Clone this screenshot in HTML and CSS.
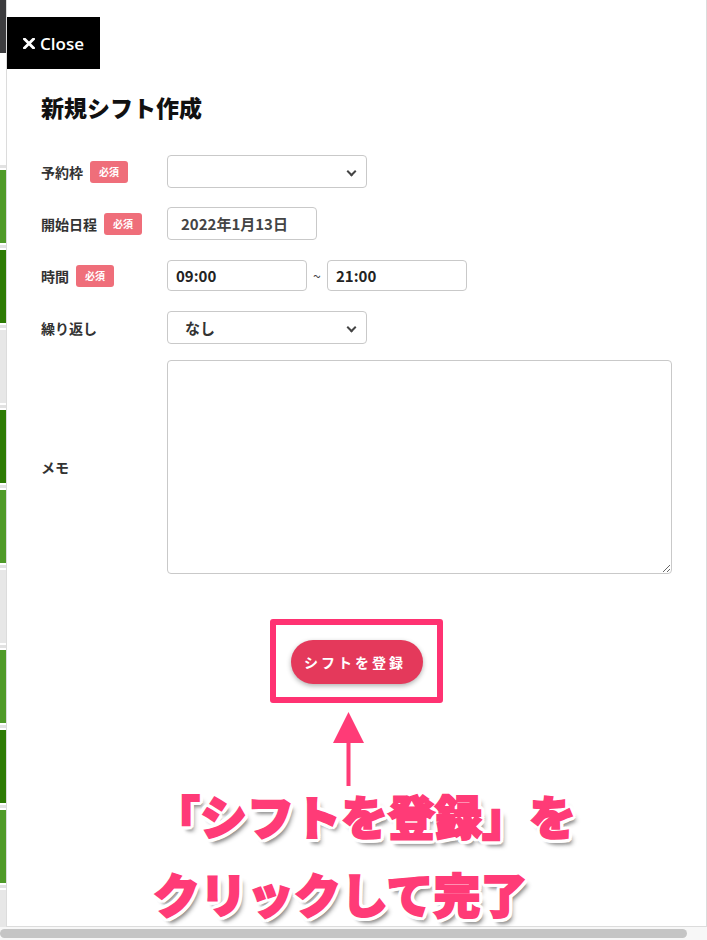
FILE: index.html
```html
<!DOCTYPE html>
<html lang="ja">
<head>
<meta charset="utf-8">
<title>新規シフト作成</title>
<link rel="stylesheet" href="styles.css">
</head>
<body>
<div class="screen">
  <div class="strip">
    <div class="s-top"></div>
    <div class="s-blank"></div>
    <div class="cell lg"></div>
    <div class="cell dg"></div>
    <div class="cell gr"></div>
    <div class="cell dg"></div>
    <div class="cell lg"></div>
    <div class="cell gr"></div>
    <div class="cell lg"></div>
    <div class="cell dg"></div>
    <div class="cell lg"></div>
    <div class="cell gr last"></div>
  </div>
  <div class="modal">
    <button class="close" type="button">
      <svg class="close-x" width="12" height="11" viewBox="0 0 12 11"><path d="M1.5 1 L10.5 10 M10.5 1 L1.5 10" stroke="#fff" stroke-width="2.8" stroke-linecap="square"/></svg>
      <span>Close</span>
    </button>
    <h2 class="title">新規シフト作成</h2>
    <form class="form">
      <div class="row r1">
        <div class="label">予約枠<span class="badge">必須</span></div>
        <div class="select-wrap w200"><select class="field select"><option></option></select></div>
      </div>
      <div class="row r2">
        <div class="label">開始日程<span class="badge">必須</span></div>
        <input class="field date" type="text" value="2022年1月13日">
      </div>
      <div class="row r3">
        <div class="label">時間<span class="badge">必須</span></div>
        <input class="field time" type="text" value="09:00">
        <span class="tilde">~</span>
        <input class="field time" type="text" value="21:00">
      </div>
      <div class="row r4">
        <div class="label">繰り返し</div>
        <div class="select-wrap w200"><select class="field select pad"><option>なし</option></select></div>
      </div>
      <div class="row r5">
        <div class="label">メモ</div>
        <textarea class="field memo"></textarea>
      </div>
    </form>
    <div class="actions"><button class="submit" type="button">シフトを登録</button></div>

    <div class="annot-rect"></div>
    <svg class="annot-arrow" width="31" height="74" viewBox="0 0 31 74">
      <polygon points="15.5,0 31,31 0,31" fill="#ff3b77"/>
      <rect x="13.5" y="28" width="4" height="46" fill="#ff3b77"/>
    </svg>
    <div class="annot-text">
      <div>「シフトを登録」を</div>
      <div>クリックして完了</div>
    </div>
  </div>
</div>
<div class="hscroll"><div class="thumb"></div></div>
</body>
</html>
```
FILE: styles.css
```css
* { box-sizing: border-box; }
html, body { margin: 0; padding: 0; }
body {
  width: 707px;
  height: 940px;
  overflow: hidden;
  background: #f7f7f7;
  font-family: "Noto Sans CJK JP", "Noto Sans", sans-serif;
  color: #333;
}
.screen {
  display: flex;
  height: 927px;
}
.strip {
  width: 6px;
  flex: none;
  display: flex;
  flex-direction: column;
  background: #fff;
  overflow: hidden;
}
.s-top { height: 53px; background: #3c3c3e; flex: none; }
.s-blank { height: 110px; background: #fff; flex: none; }
.cell {
  height: 80px;
  flex: none;
  --c: #e6e6e6;
  background: linear-gradient(#fff 0 2px, #e2e2e2 2px 5px, #fff 5px 7px, var(--c) 7px);
}
.cell.lg { --c: #4f9a28; }
.cell.dg { --c: #2d7b04; }
.cell.gr { --c: #e7e7e7; }
.cell.last { height: 60px; }

.modal {
  flex: 1;
  position: relative;
  background: #fff;
  border-left: 1px solid #dcdcdc;
  border-right: 1px solid #dcdcdc;
  border-bottom: 1px solid #dcdcdc;
}
.close {
  display: flex;
  align-items: center;
  gap: 5px;
  margin: 17px 0 0 0;
  width: 93px;
  height: 52px;
  padding: 0 0 0 16px;
  border: 0;
  background: #000;
  color: #fff;
  font-family: "Open Sans", "Noto Sans", sans-serif;
  font-size: 17px;
  font-weight: 600;
  cursor: pointer;
}
.close-x { flex: none; margin-top: 1px; }
.title {
  margin: 23px 0 0 34px;
  font-size: 23px;
  line-height: 30px;
  font-weight: 900;
  color: #111;
}
.form {
  margin: 33px 0 0 34px;
  display: flex;
  flex-direction: column;
}
.row {
  display: flex;
  align-items: center;
}
.r1 { height: 33px; }
.r2 { height: 33px; margin-top: 19px; }
.r3 { height: 31px; margin-top: 20px; }
.r4 { height: 33px; margin-top: 20px; }
.r5 { height: 214px; margin-top: 16px; }
.label {
  width: 126px;
  flex: none;
  display: flex;
  align-items: center;
  font-size: 14px;
  font-weight: 700;
  color: #333;
}
.badge {
  display: inline-flex;
  align-items: center;
  justify-content: center;
  width: 38px;
  height: 22px;
  margin-left: 7px;
  border-radius: 3px;
  background: #ef6e7a;
  color: #fff;
  font-size: 10px;
  font-weight: 700;
}
.field {
  height: 100%;
  border: 1px solid #c9c9c9;
  border-radius: 4px;
  background: #fff;
  font-family: "Noto Sans CJK JP", "Noto Sans", sans-serif;
  font-size: 15px;
  font-weight: 700;
  color: #333;
  outline: none;
}
.select-wrap {
  position: relative;
  height: 100%;
}
.select-wrap::after {
  content: "";
  position: absolute;
  right: 12px;
  top: 13px;
  width: 5px;
  height: 5px;
  border-right: 2px solid #444;
  border-bottom: 2px solid #444;
  transform: rotate(45deg);
  pointer-events: none;
}
.w200 { width: 200px; }
.select {
  width: 100%;
  -webkit-appearance: none;
  appearance: none;
  padding: 0 30px 0 12px;
}
.select.pad { padding-left: 17px; }
.date { width: 150px; padding: 0 0 0 13px; color: #444; }
.time { width: 140px; padding: 0 0 0 8px; color: #222; }
.tilde {
  width: 20px;
  text-align: center;
  font-size: 14px;
  color: #444;
}
.memo {
  width: 505px;
  resize: both;
  padding: 8px;
}
.actions {
  display: flex;
  justify-content: center;
  margin-top: 66px;
}
.submit {
  width: 132px;
  height: 44px;
  border: 0;
  border-radius: 22px;
  background: #e4395b;
  color: #fff;
  font-family: "Noto Sans CJK JP", sans-serif;
  font-size: 14px;
  font-weight: 700;
  letter-spacing: 3px;
  padding-left: 3px;
  box-shadow: 0 2px 5px rgba(0,0,0,0.3);
}

/* annotation overlay */
.annot-rect {
  position: absolute;
  left: 263px;
  top: 619px;
  width: 173px;
  height: 84px;
  border: 6px solid #ff3272;
  border-radius: 3px;
}
.annot-arrow {
  position: absolute;
  left: 326px;
  top: 712px;
}
.annot-text {
  position: absolute;
  left: 146px;
  top: 776px;
  font-family: "Noto Sans CJK JP", sans-serif;
  font-size: 47px;
  line-height: 78px;
  font-weight: 900;
  color: #ff3b77;
  -webkit-text-stroke: 2px #ff3b77;
  white-space: nowrap;
  text-shadow:
    4px 0 0 #fff, -4px 0 0 #fff, 0 4px 0 #fff, 0 -4px 0 #fff,
    3px 3px 0 #fff, -3px -3px 0 #fff, 3px -3px 0 #fff, -3px 3px 0 #fff,
    4px 2px 0 #fff, -4px 2px 0 #fff, 4px -2px 0 #fff, -4px -2px 0 #fff,
    2px 4px 0 #fff, -2px 4px 0 #fff, 2px -4px 0 #fff, -2px -4px 0 #fff,
    5px 6px 4px rgba(0,0,0,0.3), 3px 6px 3px rgba(0,0,0,0.2);
}

.hscroll {
  height: 13px;
  padding-top: 2px;
  background: #f7f7f7;
}
.thumb {
  width: 687px;
  height: 9px;
  border-radius: 5px;
  background: #c5c5c5;
}
```
